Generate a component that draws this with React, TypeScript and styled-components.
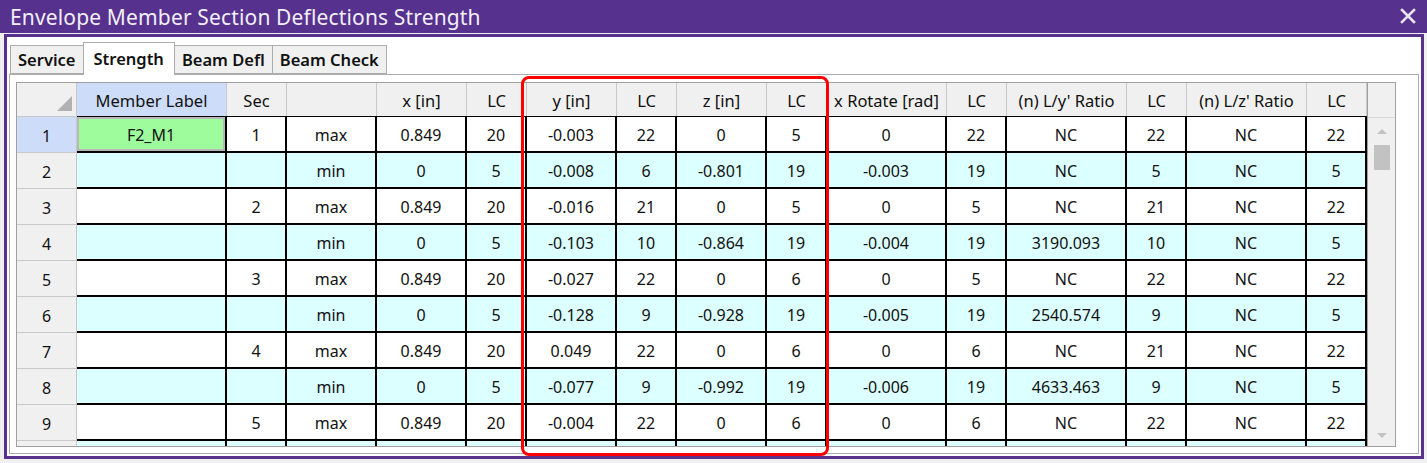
import styled, { createGlobalStyle } from "styled-components";

const GlobalStyle = createGlobalStyle`
  html, body {
    margin: 0;
    padding: 0;
    background: #f0f0f0;
  }
  body {
    font-family: "Noto Sans", "Open Sans", sans-serif;
  }
`;

const PURPLE = "#56318e";

type Cell = string | number;

const columns: { label: string; width: number }[] = [
  { label: "Member Label", width: 150 },
  { label: "Sec", width: 60 },
  { label: "", width: 90 },
  { label: "x [in]", width: 90 },
  { label: "LC", width: 60 },
  { label: "y [in]", width: 90 },
  { label: "LC", width: 60 },
  { label: "z [in]", width: 90 },
  { label: "LC", width: 60 },
  { label: "x Rotate [rad]", width: 120 },
  { label: "LC", width: 60 },
  { label: "(n) L/y' Ratio", width: 120 },
  { label: "LC", width: 60 },
  { label: "(n) L/z' Ratio", width: 120 },
  { label: "LC", width: 60 },
];

const rows: Cell[][] = [
  ["F2_M1", 1, "max", 0.849, 20, "-0.003", 22, 0, 5, 0, 22, "NC", 22, "NC", 22],
  ["", "", "min", 0, 5, "-0.008", 6, "-0.801", 19, "-0.003", 19, "NC", 5, "NC", 5],
  ["", 2, "max", 0.849, 20, "-0.016", 21, 0, 5, 0, 5, "NC", 21, "NC", 22],
  ["", "", "min", 0, 5, "-0.103", 10, "-0.864", 19, "-0.004", 19, "3190.093", 10, "NC", 5],
  ["", 3, "max", 0.849, 20, "-0.027", 22, 0, 6, 0, 5, "NC", 22, "NC", 22],
  ["", "", "min", 0, 5, "-0.128", 9, "-0.928", 19, "-0.005", 19, "2540.574", 9, "NC", 5],
  ["", 4, "max", 0.849, 20, "0.049", 22, 0, 6, 0, 6, "NC", 21, "NC", 22],
  ["", "", "min", 0, 5, "-0.077", 9, "-0.992", 19, "-0.006", 19, "4633.463", 9, "NC", 5],
  ["", 5, "max", 0.849, 20, "-0.004", 22, 0, 6, 0, 6, "NC", 22, "NC", 22],
  ["", "", "", "", "", "", "", "", "", "", "", "", "", "", ""],
];

const tabs = ["Service", "Strength", "Beam Defl", "Beam Check"];

const gridTemplate = "60px " + columns.map((c) => c.width + "px").join(" ");

const App = () => {
  return (
    <>
      <GlobalStyle />
      <Window>
        <TitleBar>
          <Title>Envelope Member Section Deflections Strength</Title>
          <CloseButton viewBox="0 0 16 16" width="16" height="16">
            <path d="M2 2 L14 14 M14 2 L2 14" stroke="#e8e4f0" strokeWidth="2.6" strokeLinecap="square" />
          </CloseButton>
        </TitleBar>
        <Frame>
          <Inner>
            <TabBar>
              {tabs.map((t) => (
                <Tab key={t} $active={t === "Strength"}>
                  {t}
                </Tab>
              ))}
            </TabBar>
            <Panel>
              <GridFrame>
                <Table>
                  <Row>
                    <Corner />
                    {columns.map((c, i) => (
                      <HeaderCell key={i} $selected={i === 0}>
                        {c.label}
                      </HeaderCell>
                    ))}
                  </Row>
                  {rows.map((r, ri) => (
                    <Row key={ri}>
                      <RowHeader $selected={ri === 0}>{ri < 9 ? ri + 1 : ""}</RowHeader>
                      {r.map((v, ci) => (
                        <DataCell key={ci} $alt={ri % 2 === 1} $label={ci === 0 && v !== ""}>
                          {v}
                        </DataCell>
                      ))}
                    </Row>
                  ))}
                </Table>
                <ScrollArea>
                  <ScrollHead />
                  <Track>
                    <Arrow $up />
                    <Thumb />
                    <TrackFill />
                    <Arrow />
                  </Track>
                </ScrollArea>
              </GridFrame>
            </Panel>
          </Inner>
        </Frame>
        <Highlight />
      </Window>
    </>
  );
};

export default App;

const Window = styled.div`
  position: relative;
  width: 1427px;
  height: 463px;
  display: flex;
  flex-direction: column;
  background: #f0f0f0;
  box-sizing: border-box;
`;

const TitleBar = styled.div`
  height: 33px;
  background: ${PURPLE};
  display: flex;
  align-items: center;
  justify-content: space-between;
  padding: 0 11px 0 10px;
  flex-shrink: 0;
`;

const Title = styled.div`
  color: #f2eff8;
  font-size: 21px;
  font-family: "Noto Sans", sans-serif;
  letter-spacing: 0.15px;
  margin-top: 1px;
`;

const CloseButton = styled.svg`
  display: block;
  margin-top: -1px;
`;

const Frame = styled.div`
  flex: 1;
  margin: 1px 3px 4px 4px;
  border: 3px solid ${PURPLE};
  background: #fff;
  display: flex;
  flex-direction: column;
`;

const Inner = styled.div`
  flex: 1;
  padding: 5px 2px 2px 2px;
  display: flex;
  flex-direction: column;
`;

const TabBar = styled.div`
  height: 32px;
  display: flex;
  align-items: flex-end;
  padding-left: 1px;
  position: relative;
  z-index: 1;
`;

const Tab = styled.div<{ $active?: boolean }>`
  box-sizing: border-box;
  height: ${(p) => (p.$active ? "33px" : "29px")};
  margin-bottom: ${(p) => (p.$active ? "-1px" : "0")};
  padding: ${(p) => (p.$active ? "0 10px 2px" : "0 7px")};
  background: ${(p) => (p.$active ? "#fff" : "#f0f0f0")};
  border: 1px solid #acacac;
  border-bottom: ${(p) => (p.$active ? "none" : "1px solid #acacac")};
  margin-left: -1px;
  display: flex;
  align-items: center;
  font-size: 16.5px;
  font-weight: 600;
  color: #111;
  &:first-child {
    margin-left: 0;
  }
`;

const Panel = styled.div`
  flex: 1;
  border: 1px solid #acacac;
  padding: 7px 0 5px 6px;
  display: flex;
`;

const GridFrame = styled.div`
  width: 1380px;
  height: 365px;
  box-sizing: border-box;
  border: 1px solid #a0a0a0;
  display: flex;
  overflow: hidden;
`;

const Table = styled.div`
  width: 1350px;
  display: flex;
  flex-direction: column;
  flex-shrink: 0;
`;

const Row = styled.div`
  display: grid;
  grid-template-columns: ${gridTemplate};
  flex-shrink: 0;
`;

const Corner = styled.div`
  position: relative;
  height: 34px;
  background: #f0f0f0;
  border-right: 1px solid #c8c8c8;
  border-bottom: 1px solid #c8c8c8;
  box-sizing: border-box;
  &::after {
    content: "";
    position: absolute;
    right: 4px;
    bottom: 5px;
    width: 0;
    height: 0;
    border-left: 15px solid transparent;
    border-bottom: 15px solid #b1b1b1;
  }
`;

const HeaderCell = styled.div<{ $selected?: boolean }>`
  height: 34px;
  box-sizing: border-box;
  background: ${(p) => (p.$selected ? "#cddcf8" : "#f0f0f0")};
  border-right: 1px solid #c8c8c8;
  border-bottom: 1px solid #c8c8c8;
  display: flex;
  align-items: center;
  justify-content: center;
  padding-top: 1px;
  font-size: 16.5px;
  color: #111;
  white-space: nowrap;
`;

const RowHeader = styled.div<{ $selected?: boolean }>`
  height: 36px;
  box-sizing: border-box;
  background: ${(p) => (p.$selected ? "#cddcf8" : "#f0f0f0")};
  border-right: 1px solid #c8c8c8;
  border-bottom: 1px solid #c8c8c8;
  display: flex;
  align-items: center;
  justify-content: center;
  padding-top: 2px;
  font-size: 16px;
  color: #111;
`;

const DataCell = styled.div<{ $alt?: boolean; $label?: boolean }>`
  height: 36px;
  box-sizing: border-box;
  background: ${(p) => (p.$label ? "#9efc9c" : p.$alt ? "#dcffff" : "#fff")};
  border-top: 1px solid #000;
  border-bottom: 1px solid #000;
  border-right: 2px solid #000;
  margin-top: -1px;
  box-shadow: ${(p) => (p.$label ? "inset 0 0 0 2px #b8b8b8" : "none")};
  display: flex;
  align-items: center;
  justify-content: center;
  padding-top: 2px;
  font-size: 16px;
  color: #111;
  white-space: nowrap;
`;

const ScrollArea = styled.div`
  flex: 1;
  display: flex;
  flex-direction: column;
  border-left: 1px solid #a0a0a0;
  background: #f0f0f0;
`;

const ScrollHead = styled.div`
  height: 34px;
  border-bottom: 1px solid #d8d8d8;
  flex-shrink: 0;
`;

const Track = styled.div`
  flex: 1;
  display: flex;
  flex-direction: column;
  align-items: center;
  padding: 11px 0 8px;
`;

const Arrow = styled.div<{ $up?: boolean }>`
  width: 0;
  height: 0;
  border-left: 5px solid transparent;
  border-right: 5px solid transparent;
  ${(p) => (p.$up ? "border-bottom: 5px solid #c2c2c2;" : "border-top: 5px solid #c2c2c2;")}
`;

const Thumb = styled.div`
  width: 16px;
  height: 25px;
  margin-top: 11px;
  background: #c2c2c2;
`;

const TrackFill = styled.div`
  flex: 1;
`;

const Highlight = styled.div`
  position: absolute;
  left: 521px;
  top: 76px;
  width: 308px;
  height: 380px;
  box-sizing: border-box;
  border: 3px solid #ff0000;
  border-radius: 8px;
  pointer-events: none;
`;
